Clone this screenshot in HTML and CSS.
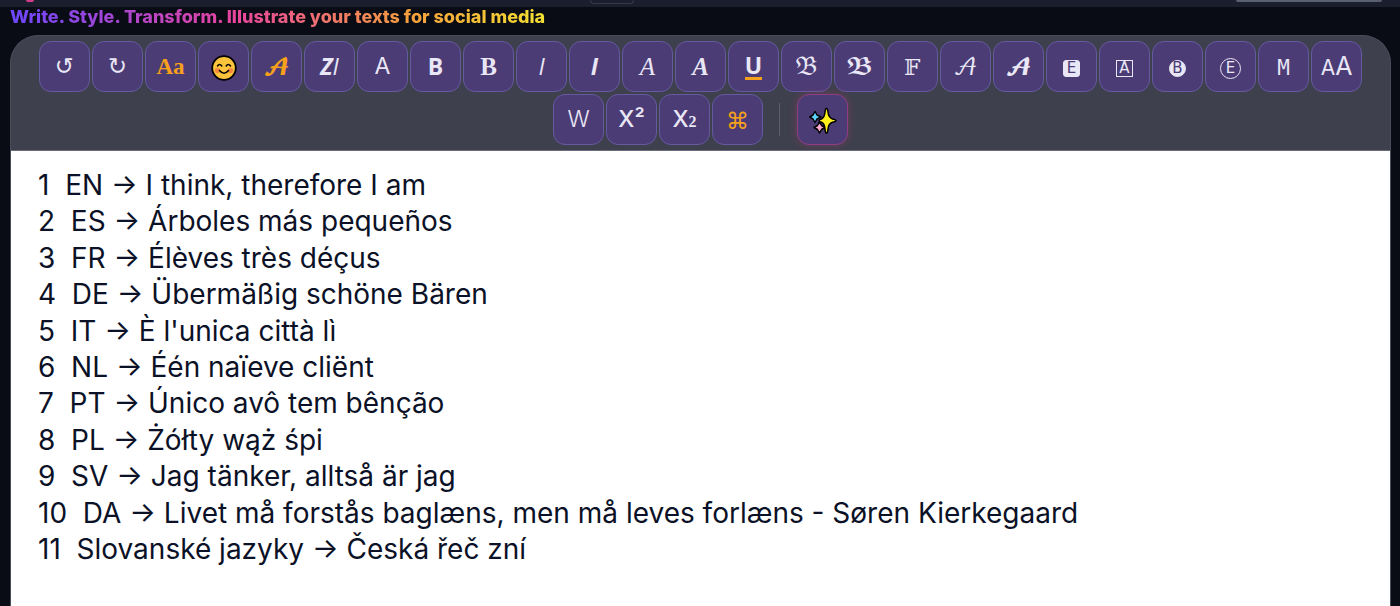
FILE: index.html
```
<!DOCTYPE html>
<html lang="en">
<head>
  <meta charset="UTF-8">
  <title>Write. Style. Transform.</title>
  <meta name="viewport" content="width=device-width, initial-scale=1.0">
  <link rel="stylesheet" href="styles.css">
</head>
<body>

<header class="topbar">
  <div class="brand-dot"></div>
  <div class="top-pill"></div>
  <div class="top-action"></div>
</header>

<main class="page">
  <h1 class="tagline">Write. Style. Transform. Illustrate your texts for social media</h1>

  <section class="editor">
    <div class="toolbar" role="toolbar" aria-label="Text styles">
      <button class="tool symbol" aria-label="Undo">↺</button>
      <button class="tool symbol" aria-label="Redo">↻</button>
      <button class="tool serif strong accent fonts" aria-label="Fonts">Aa</button>
      <button class="tool low" aria-label="Emoji">
        <svg width="26" height="26" viewBox="0 0 26 26">
          <circle cx="13" cy="13" r="11.800" fill="#fcc43c" stroke="#000" stroke-width="1.800"/>
          <circle cx="6.500" cy="15.500" r="2.600" fill="#f5873f"/>
          <circle cx="19.500" cy="15.500" r="2.600" fill="#f5873f"/>
          <path d="M6.500 11q2-3 4.300 0M15.200 11q2-3 4.300 0M8.500 15.500q4.500 5.500 9 0" fill="none" stroke="#000" stroke-width="1.500" stroke-linecap="round"/>
        </svg>
      </button>
      <button class="tool math low accent" aria-label="Script accent">𝓐</button>
      <button class="tool sans" aria-label="Clear style"><b><i>Z</i></b><i>I</i></button>
      <button class="tool" aria-label="Sans">A</button>
      <button class="tool sans strong" aria-label="Bold sans">B</button>
      <button class="tool serif strong" aria-label="Bold serif">B</button>
      <button class="tool sans italic" aria-label="Italic sans">I</button>
      <button class="tool sans strong italic" aria-label="Bold italic sans">I</button>
      <button class="tool serif italic" aria-label="Italic serif">A</button>
      <button class="tool serif strong italic" aria-label="Bold italic serif">A</button>
      <button class="tool sans strong" aria-label="Underline"><span class="underline">U</span></button>
      <button class="tool math low" aria-label="Fraktur">𝔅</button>
      <button class="tool math low" aria-label="Bold fraktur">𝕭</button>
      <button class="tool math low" aria-label="Double struck">𝔽</button>
      <button class="tool math low" aria-label="Script">𝒜</button>
      <button class="tool math low" aria-label="Bold script">𝓐</button>
      <button class="tool low" aria-label="Filled square"><span class="chip filled">E</span></button>
      <button class="tool low" aria-label="Square"><span class="chip">A</span></button>
      <button class="tool low" aria-label="Filled circle"><span class="chip filled round">B</span></button>
      <button class="tool low" aria-label="Circle"><span class="chip round ring">E</span></button>
      <button class="tool code low" aria-label="Monospace">M</button>
      <button class="tool caps" aria-label="Small caps"><span><small>A</small>A</span></button>
      <button class="tool light" aria-label="Light">W</button>
      <button class="tool medium" aria-label="Superscript">X²</button>
      <button class="tool medium" aria-label="Subscript"><span>X<small class="sub">2</small></span></button>
      <button class="tool symbol low accent" aria-label="Symbols">⌘</button>
      <span class="divider"></span>
      <button class="tool magic low" aria-label="Illustrate">
        <svg width="28" height="28" viewBox="0 0 28 28" stroke="#000" stroke-width="1.500" stroke-linejoin="round">
          <path d="M6 4.500L8 8L12 10L8 12L6 15.500L4 12L.8 10L4 8Z" fill="#5cd4ff"/>
          <path d="M10.500 14.800L12.500 18.500L16 20.500L12.500 22.500L10.500 26L8.500 22.500L5 20.500L8.500 18.500Z" fill="#ffacd0"/>
          <path d="M17.500 1.500Q18.500 1 19 5Q19.500 10.500 23.500 12Q27 12.700 27 13.700Q27 14.500 23.500 15.300Q19.500 16.500 19 22Q18.500 26.500 17.500 26Q16.500 26.500 16 22Q15.500 16.500 12.500 15.300Q10 14.500 10 13.700Q10 12.700 12.500 12Q15.500 10.500 16 5Q16.500 1 17.500 1.500Z" fill="#fff01c"/>
        </svg>
      </button>
    </div>

    <textarea class="text" aria-label="Your text" spellcheck="false">
1  EN → I think, therefore I am
2  ES → Árboles más pequeños
3  FR → Élèves très déçus
4  DE → Übermäßig schöne Bären
5  IT → È l'unica città lì
6  NL → Één naïeve cliënt
7  PT → Único avô tem bênção
8  PL → Żółty wąż śpi
9  SV → Jag tänker, alltså är jag
10  DA → Livet må forstås baglæns, men må leves forlæns - Søren Kierkegaard
11  Slovanské jazyky → Česká řeč zní</textarea>
  </section>
</main>

</body>
</html>
```

FILE: styles.css
```
* { box-sizing: border-box; }
body {
  margin: 0;
  height: 100vh;
  display: flex;
  flex-direction: column;
  overflow: hidden;
  font-family: Inter, "Liberation Sans", sans-serif;
  background: #090b15;
  color: #e9e6f5;
}

.topbar {
  height: 7px;
  flex: none;
  display: grid;
  grid-template-columns: 1fr auto 1fr;
  align-items: start;
  padding: 0 18px;
  background: #1b1f2d;
}
.brand-dot {
  width: 8px;
  height: 2px;
  margin-left: 8px;
  background: #d63c8c;
  border-radius: 0 0 4px 4px;
}
.top-pill {
  width: 44px;
  height: 4px;
  margin-right: 176px;
  border: 1px solid #343847;
  border-top: 0;
  border-radius: 0 0 12px 12px;
}
.top-action {
  width: 146px;
  height: 2px;
  justify-self: end;
  background: #5b6070;
  border-radius: 0 0 8px 8px;
}

.page {
  flex: 1;
  display: flex;
  flex-direction: column;
  padding: 0 9px 0 10px;
}
.tagline {
  align-self: flex-start;
  margin: 0 0 8px;
  font-size: 18px;
  line-height: 20px;
  font-weight: 800;
  background: linear-gradient(90deg, #6c47ff, #e8459f 42%, #f5a03c 75%, #f5e032);
  -webkit-background-clip: text;
  background-clip: text;
  color: transparent;
}

.editor {
  flex: 1;
  display: flex;
  flex-direction: column;
  border: 1px solid #4a4c5a;
  border-bottom: 0;
  border-radius: 28px 28px 0 0;
  background: #3e404d;
  overflow: hidden;
}
.toolbar {
  display: flex;
  flex-wrap: wrap;
  justify-content: center;
  gap: 2px;
  padding: 5px 24px;
  border-bottom: 1px solid #6b6c78;
}

.tool {
  width: 51px;
  height: 51px;
  display: flex;
  align-items: center;
  justify-content: center;
  padding: 0;
  border: 1px solid #655aa0;
  border-radius: 12px;
  background: #4b3c75;
  color: #e9e6f5;
  font-family: inherit;
  font-size: 23px;
  line-height: 1;
  cursor: pointer;
}
.tool:hover { background: #574689; }
.strong { font-weight: 700; }
.medium { font-weight: 500; }
.light { font-weight: 300; }
.italic { font-style: italic; }
.low { padding-top: 3px; }
.sans { font-family: "Open Sans", sans-serif; }
.serif { font-family: "Liberation Serif", serif; font-size: 25px; }
.fonts { font-size: 23px; }
.code { font-family: "DejaVu Sans Mono", monospace; font-size: 21px; }
.math { font-family: "DejaVu Math TeX Gyre", "DejaVu Sans", serif; }
.symbol { font-family: "DejaVu Sans", sans-serif; }
.accent { color: #f7a01b; }
.underline { border-bottom: 3px solid #f7a01b; }
.caps { font-size: 25px; }
.tool small { font-size: 21px; }
.tool .sub {
  font-family: "Liberation Serif", serif;
  font-size: 16px;
  font-weight: 700;
}

.chip {
  width: 17px;
  height: 17px;
  display: flex;
  align-items: center;
  justify-content: center;
  border: 1px solid #e9e6f5;
  font-family: "DejaVu Sans", sans-serif;
  font-size: 15px;
  line-height: 1;
}
.filled {
  background: #e9e6f5;
  color: #4b3c75;
  border-radius: 3px;
}
.round { border-radius: 50%; }
.ring {
  width: 21px;
  height: 21px;
}

.divider {
  width: 1px;
  height: 33px;
  align-self: center;
  margin: 0 15px 0 14px;
  background: #5d5e72;
}
.magic {
  border-color: #8f3f80;
  box-shadow: 0 0 8px rgba(214, 60, 140, 0.3);
}

.text {
  flex: 1;
  width: 100%;
  padding: 16px 27px;
  border: 0;
  outline: 0;
  resize: none;
  background: #fff;
  color: #0b1126;
  font-family: Inter, sans-serif;
  font-size: 28px;
  line-height: 1.3;
}
```
